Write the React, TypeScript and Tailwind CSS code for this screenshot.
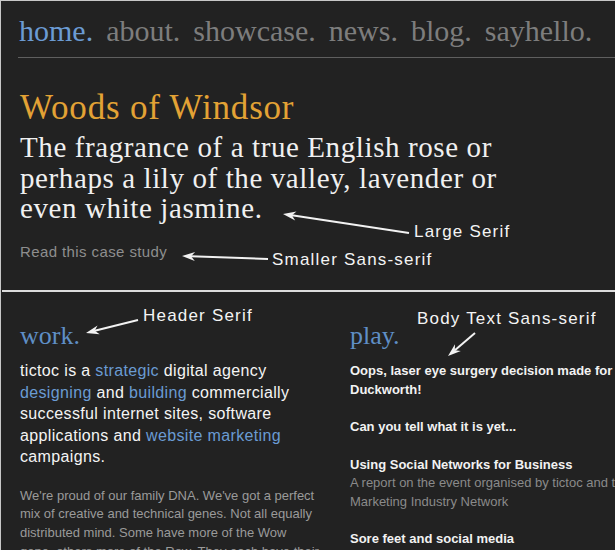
const navItems = ['home.', 'about.', 'showcase.', 'news.', 'blog.', 'sayhello.'];

function Arrow({ x1, y1, x2, y2 }: { x1: number; y1: number; x2: number; y2: number }) {
  // shaft from tail (x1,y1) to tip (x2,y2), narrow filled head
  const a = Math.atan2(y2 - y1, x2 - x1);
  const len = 13;
  const w = 4.5;
  const bx = x2 - len * Math.cos(a);
  const by = y2 - len * Math.sin(a);
  const px = -Math.sin(a) * w;
  const py = Math.cos(a) * w;
  return (
    <g>
      <line x1={x1} y1={y1} x2={bx + 4 * Math.cos(a)} y2={by + 4 * Math.sin(a)} stroke="#f2f2f2" strokeWidth="2" />
      <polygon
        points={`${x2},${y2} ${bx + px},${by + py} ${bx + 4 * Math.cos(a)},${by + 4 * Math.sin(a)} ${bx - px},${by - py}`}
        fill="#f2f2f2"
      />
    </g>
  );
}

const serif = "font-['Liberation_Serif',Georgia,serif]";
const sans = "font-['Liberation_Sans',Arial,sans-serif]";
const note = `${sans} absolute text-[17px] leading-[20px] tracking-[1.2px] text-[#f4f4f4] whitespace-nowrap`;

export default function App() {
  return (
    <div className="relative w-[615px] h-[550px] overflow-hidden bg-[#222222] border-l border-t border-[#c8c8c8]">
      {/* nav */}
      <nav className={`ml-[17px] flex gap-[13px] pl-px pt-[15px] h-[57px] border-b border-[#5f5f5f] text-[30px] leading-[30px] ${serif} whitespace-nowrap`}>
        {navItems.map((n, i) => (
          <span key={n} className={i === 0 ? 'text-[#6b9bd3]' : 'text-[#7d7d7d]'}>{n}</span>
        ))}
      </nav>

      {/* hero */}
      <section className="pl-[19px] pt-[30px] h-[232px]">
        <h1 className={`${serif} text-[35px] leading-[40px] tracking-[0.8px] text-[#e3a235]`}>Woods of Windsor</h1>
        <p className={`${serif} mt-[4px] text-[29px] leading-[30.5px] tracking-[0.6px] text-[#f0f0f0] w-[495px]`}>
          The fragrance of a true English rose or perhaps a lily of the valley, lavender or even white jasmine.
        </p>
        <a className={`${sans} block mt-[19px] text-[15px] leading-[18px] tracking-[0.4px] text-[#8e8e8e]`}>Read this case study</a>
      </section>

      <div className="h-[2px] bg-[#dcdcdc] ml-px" />

      {/* columns */}
      <div className="grid grid-cols-[330px_1fr] pt-[29px]">
        <div className="pl-[19px] pr-[10px]">
          <h2 className={`${serif} text-[26px] leading-[30px] text-[#5f8fc6]`}>work.</h2>
          <p className={`${sans} mt-[9px] text-[16px] leading-[21.5px] tracking-[0.35px] text-[#f4f4f4] w-[292px]`}>
            tictoc is a <span className="text-[#6a9bd3]">strategic</span> digital agency{' '}
            <span className="text-[#6a9bd3]">designing</span> and <span className="text-[#6a9bd3]">building</span> commercially
            successful internet sites, software applications and{' '}
            <span className="text-[#6a9bd3]">website marketing</span> campaigns.
          </p>
          <p className={`${sans} mt-[19px] text-[13px] leading-[18.7px] text-[#9a9a9a] w-[300px]`}>
            We're proud of our family DNA. We've got a perfect mix of creative and technical genes. Not all equally
            distributed mind. Some have more of the Wow gene, others more of the Row. They each have their
          </p>
        </div>
        <div className="pl-[19px] whitespace-nowrap">
          <h2 className={`${serif} text-[26px] leading-[30px] text-[#5f8fc6]`}>play.</h2>
          <div className={`${sans} mt-[11px] text-[13px] leading-[18.5px] flex flex-col gap-[19px]`}>
            <p className="font-bold text-[#f2f2f2]">
              Oops, laser eye surgery decision made for Pete
              <br />
              Duckworth!
            </p>
            <p className="font-bold text-[#f2f2f2]">Can you tell what it is yet...</p>
            <div>
              <p className="font-bold text-[#f2f2f2]">Using Social Networks for Business</p>
              <p className="text-[#8a8a8a]">
                A report on the event organised by tictoc and the
                <br />
                Marketing Industry Network
              </p>
            </div>
            <p className="font-bold text-[#f2f2f2]">Sore feet and social media</p>
          </div>
        </div>
      </div>

      {/* annotations */}
      <svg className="absolute left-0 top-0 pointer-events-none" width="615" height="550">
        <Arrow x1={408} y1={232} x2={282} y2={213} />
        <Arrow x1={267} y1={258} x2={181} y2={255} />
        <Arrow x1={137} y1={319} x2={85} y2={332} />
        <Arrow x1={474} y1={332} x2={447} y2={355} />
      </svg>
      <span className={`${note} left-[413px] top-[221px]`}>Large Serif</span>
      <span className={`${note} left-[271px] top-[249px]`}>Smaller Sans-serif</span>
      <span className={`${note} left-[142px] top-[305px]`}>Header Serif</span>
      <span className={`${note} left-[416px] top-[308px]`}>Body Text Sans-serif</span>
    </div>
  );
}
